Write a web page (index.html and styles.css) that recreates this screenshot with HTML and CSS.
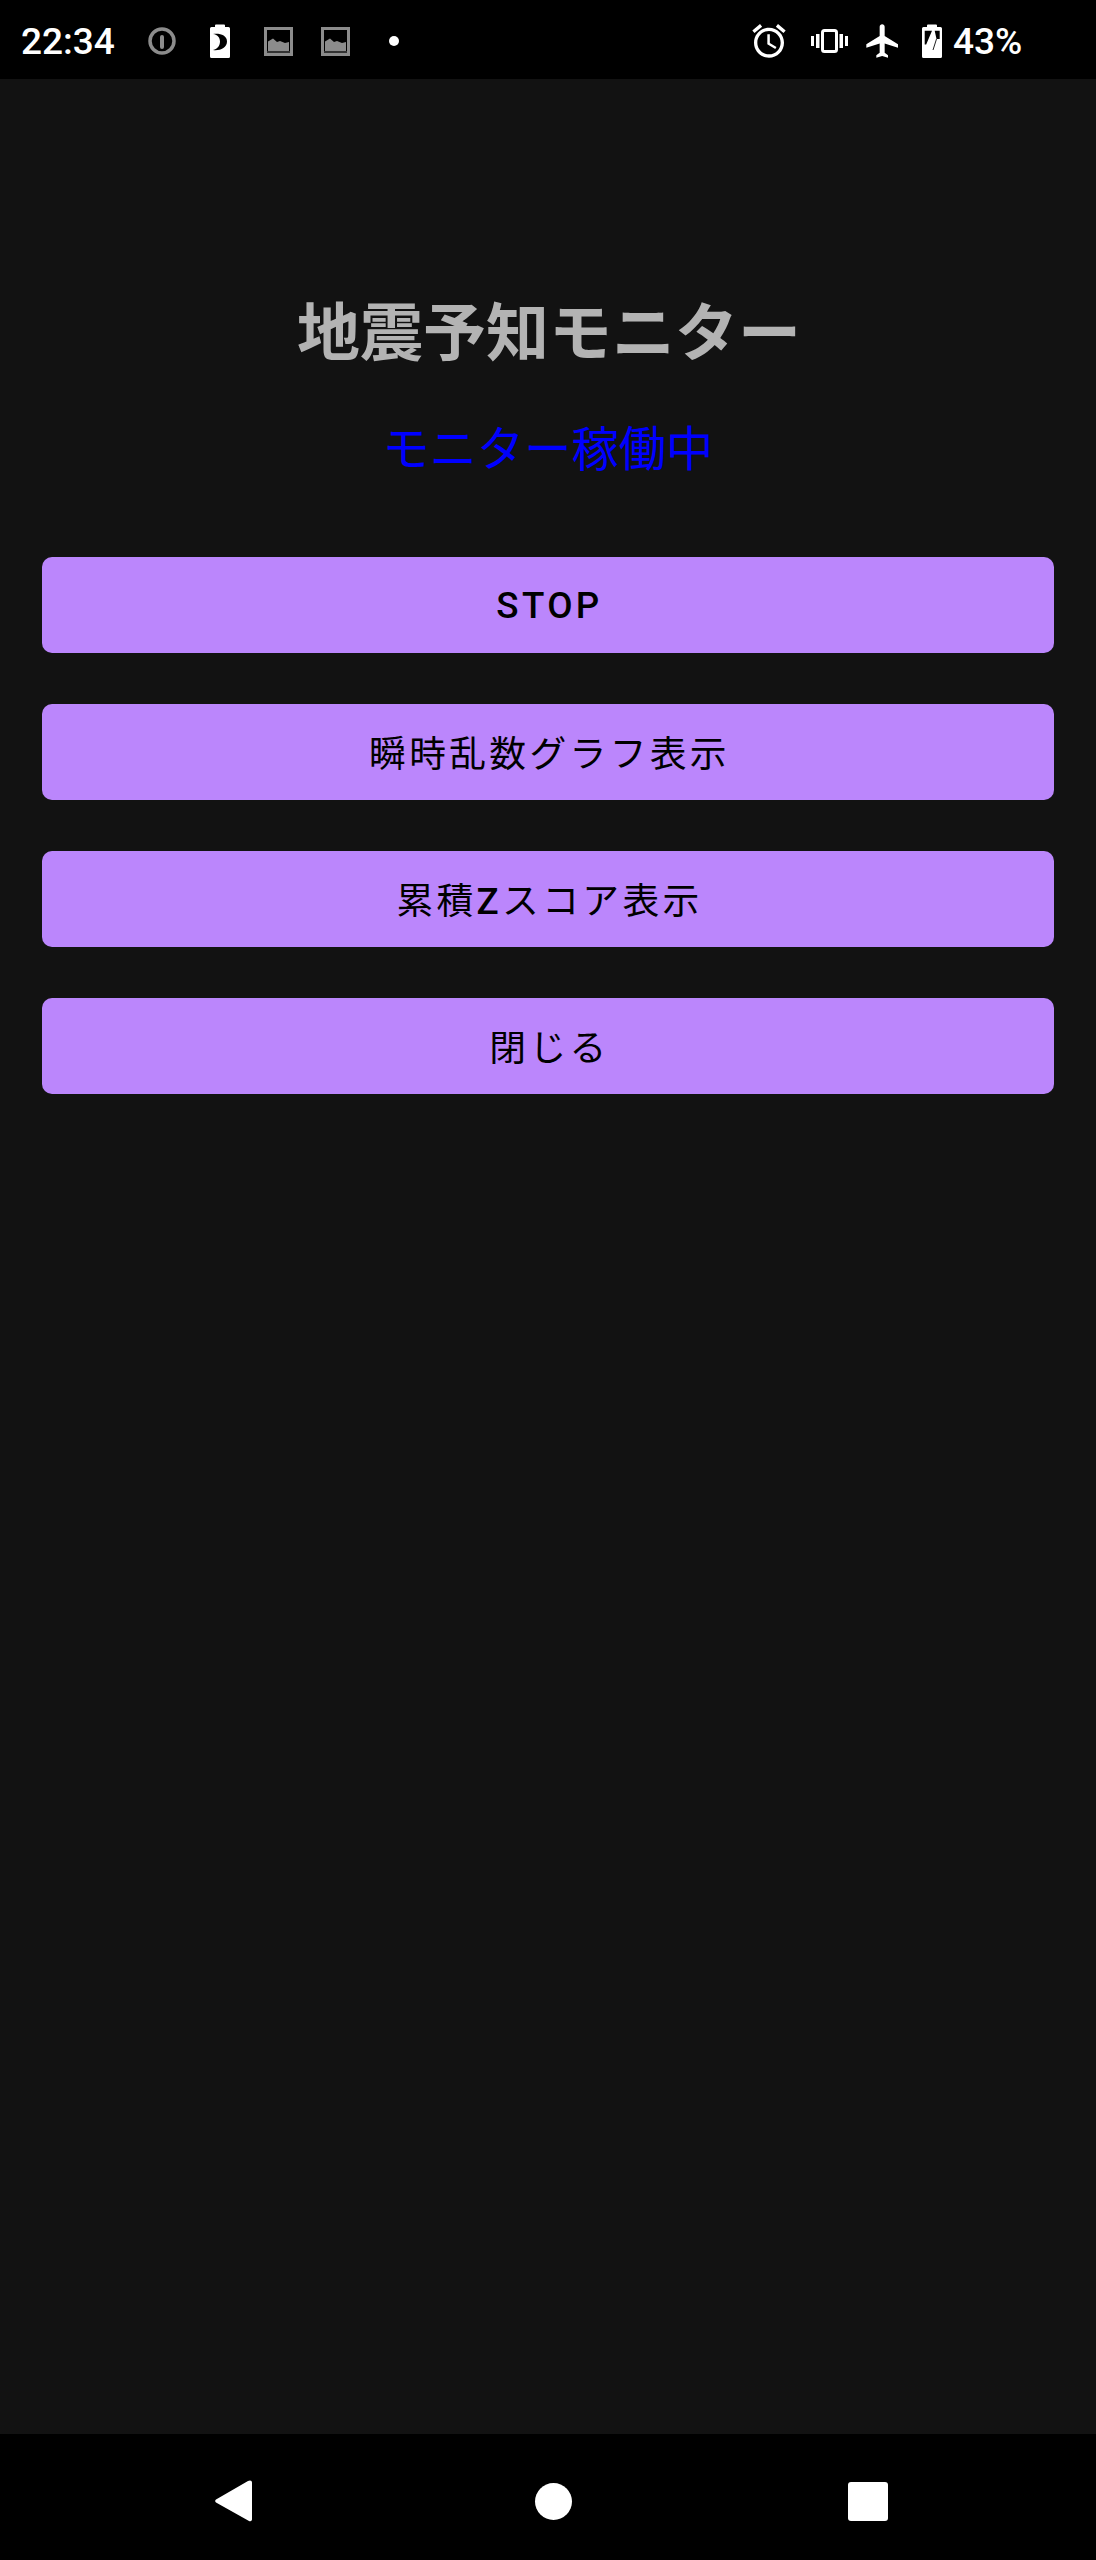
FILE: index.html
```html
<!DOCTYPE html>
<html lang="ja">
<head>
<meta charset="utf-8">
<title>地震予知モニター</title>
<link rel="stylesheet" href="styles.css">
</head>
<body>
<div class="screen">
  <header class="status-bar">
    <span class="clock">22:34</span>
    <svg class="ic ic-info" viewBox="0 0 28 28"><circle cx="14" cy="14" r="12" fill="none" stroke="#8c8c8c" stroke-width="3.500"/><rect x="12" y="8" width="4" height="14" rx="2" fill="#8c8c8c"/></svg>
    <svg class="ic ic-saver" viewBox="0 0 20 34"><path fill="#fff" fill-rule="evenodd" d="M5 1.500A1 1 0 0 1 6 .5h8a1 1 0 0 1 1 1V3h3.500A1.500 1.500 0 0 1 20 4.500V32.500A1.500 1.500 0 0 1 18.500 34H1.500A1.500 1.500 0 0 1 0 32.500V4.500A1.500 1.500 0 0 1 1.500 3H5zM3 10c5 .5 7 4 7 7.500S8 25 3 26c6.500 1 14-2 14-8.500S9.500 9 3 10z"/></svg>
    <svg class="ic ic-img" viewBox="0 0 29 29"><rect x="1.500" y="1.500" width="26" height="26" fill="none" stroke="#8c8c8c" stroke-width="3"/><path fill="#8c8c8c" d="M4 24V14.500l5-3 4 3.500 3-1 5 2 4-1v9z"/><path stroke="#666" stroke-width="1" d="M3 25h23"/></svg>
    <svg class="ic ic-img ic-img2" viewBox="0 0 29 29"><rect x="1.500" y="1.500" width="26" height="26" fill="none" stroke="#8c8c8c" stroke-width="3"/><path fill="#8c8c8c" d="M4 24V14.500l5-3 4 3.500 3-1 5 2 4-1v9z"/><path stroke="#666" stroke-width="1" d="M3 25h23"/></svg>
    <span class="dot"></span>
    <span class="spacer"></span>
    <svg class="ic ic-alarm" viewBox="0 0 24 24"><path fill="#fff" d="M22 5.720l-4.600-3.860-1.290 1.530 4.600 3.860L22 5.720zM7.880 3.390L6.600 1.860 2 5.710l1.290 1.530 4.590-3.850zM12.500 8H11v6l4.750 2.850.75-1.230-4-2.370V8zM12 4c-4.970 0-9 4.030-9 9s4.030 9 9 9 9-4.030 9-9-4.030-9-9-9zm0 16c-3.870 0-7-3.130-7-7s3.130-7 7-7 7 3.130 7 7-3.130 7-7 7z"/></svg>
    <svg class="ic ic-vib" viewBox="0 0 37 24"><path fill="#fff" d="M0 7h3v10H0zM5 5h3.500v14H5zM28.500 5H32v14h-3.500zM34 7h3v10h-3z"/><rect x="11.500" y="1.500" width="14" height="21" rx="2" fill="none" stroke="#fff" stroke-width="3"/></svg>
    <svg class="ic ic-plane" viewBox="0 0 24 24"><path fill="#fff" d="M21 16v-2l-8-5V3.500c0-.83-.67-1.500-1.500-1.500S10 2.670 10 3.500V9l-8 5v2l8-2.500V19l-2 1.500V22l3.500-1 3.500 1v-1.500L13 19v-5.500l8 2.500z"/></svg>
    <svg class="ic ic-batt" viewBox="0 0 20 34"><path fill="#fff" fill-rule="evenodd" d="M5 1.500A1 1 0 0 1 6 .5h8a1 1 0 0 1 1 1V3h3.500A1.500 1.500 0 0 1 20 4.500V32.500A1.500 1.500 0 0 1 18.500 34H1.500A1.500 1.500 0 0 1 0 32.500V4.500A1.500 1.500 0 0 1 1.500 3H5zM2.700 6.700V20.500H4.200L10 6.700zM12.700 6.700 14.500 15H17.700V6.700z"/><path stroke="#222" stroke-width="1" d="M14.500 15 11 26"/></svg>
    <span class="battery-pct">43%</span>
  </header>

  <main class="content">
    <h1 class="title">地震予知モニター</h1>
    <p class="status">モニター稼働中</p>
    <div class="buttons">
      <button class="btn btn-latin"><span class="latin">STOP</span></button>
      <button class="btn">瞬時乱数グラフ表示</button>
      <button class="btn">累積<span class="latin">Z</span>スコア表示</button>
      <button class="btn">閉じる</button>
    </div>
  </main>

  <footer class="nav-bar">
    <svg class="nav-back" viewBox="0 0 37 42"><path fill="#fff" d="M35 0.500A2 2 0 0 1 37 2.500V39.500A2 2 0 0 1 34 41L1 22.500A2 2 0 0 1 1 19.500L33 1z"/></svg>
    <span class="nav-home"></span>
    <span class="nav-recent"></span>
  </footer>
</div>
</body>
</html>
```
FILE: styles.css
```css
* { box-sizing: border-box; }
html, body { margin: 0; padding: 0; background: #121212; }
.screen {
  width: 1096px;
  height: 2560px;
  display: flex;
  flex-direction: column;
  font-family: Roboto, "Noto Sans CJK JP", sans-serif;
  overflow: hidden;
}

/* status bar */
.status-bar {
  height: 79px;
  flex: none;
  background: #000;
  color: #fff;
  display: flex;
  align-items: center;
  padding: 3px 74px 0 21px;
}
.clock { font-size: 37px; font-weight: 500; width: 93px; line-height: 44px; margin-top: 1px; }
.battery-pct { font-size: 37px; font-weight: 500; width: 69px; line-height: 44px; margin-top: 1px; margin-left: 11px; }
.spacer { flex: 1; }
.ic { flex: none; display: block; }
.ic-info { width: 28px; height: 28px; margin-left: 34px; }
.ic-saver { width: 20px; height: 34px; margin-left: 34px; }
.ic-img { width: 29px; height: 29px; margin-left: 34px; }
.ic-img2 { margin-left: 28px; }
.dot { width: 10px; height: 10px; border-radius: 50%; background: #fff; margin-left: 39px; }
.ic-alarm { width: 40px; height: 40px; }
.ic-vib { width: 37px; height: 24px; margin-left: 22px; }
.ic-plane { width: 40px; height: 40px; margin-left: 15px; }
.ic-batt { width: 20px; height: 34px; margin-left: 19px; }

/* content */
.content {
  flex: 1;
  background: #121212;
  padding: 0 42px;
  display: flex;
  flex-direction: column;
}
.title {
  margin: 213px 0 0;
  padding-left: 2px;
  text-align: center;
  font-size: 63px;
  line-height: 84px;
  font-weight: 700;
  color: #b3b3b3;
}
.status {
  margin: 42px 0 0;
  text-align: center;
  font-size: 47.250px;
  line-height: 64px;
  font-weight: 400;
  color: #0000ff;
}
.buttons {
  margin-top: 75px;
  display: flex;
  flex-direction: column;
  gap: 51px;
}
.btn {
  height: 96px;
  border: 0;
  padding: 0 0 2px 3px;
  border-radius: 10px;
  background: #bb86fc;
  color: #000;
  font-family: inherit;
  font-size: 36.750px;
  letter-spacing: 3.350px;
  font-weight: 400;
}
.btn-latin { padding-bottom: 0; }
.latin { font-weight: 500; }

/* nav bar */
.nav-bar {
  height: 126px;
  flex: none;
  background: #000;
  display: flex;
  align-items: center;
  padding-left: 215px;
}
.nav-back { width: 37px; height: 42px; flex: none; margin-top: 8px; }
.nav-home { width: 37px; height: 37px; border-radius: 50%; background: #fff; flex: none; margin-left: 283px; margin-top: 8px; }
.nav-recent { width: 40px; height: 39px; border-radius: 3px; background: #fff; flex: none; margin-left: 276px; margin-top: 8px; }
```
